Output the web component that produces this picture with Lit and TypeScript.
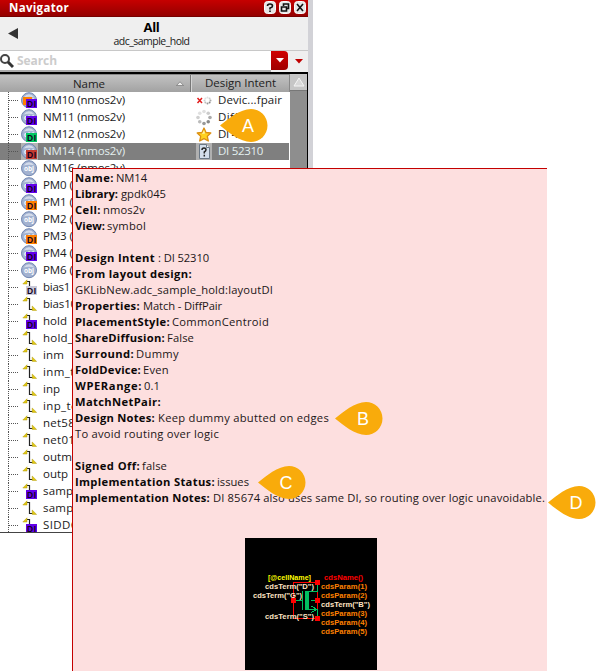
import { LitElement, html, css, svg, nothing } from "lit";
import { customElement } from "lit/decorators.js";

interface Row { name: string; w: number; kind: "obj" | "net"; di?: string; extra?: boolean; intent?: string; iw?: number; status?: string; sel?: boolean }
interface Field { label?: string; lw?: number; at?: number; value?: string; vw?: number }

const V = "#6200ea", O = "#ff7f00";
const ROWS: Row[] = [
  { name: "NM10 (nmos2v)", w: 81, kind: "obj", di: V, extra: true, intent: "Devic...fpair", iw: 63, status: "mixed" },
  { name: "NM11 (nmos2v)", w: 81, kind: "obj", di: V, intent: "DiffPair", iw: 42, status: "spin" },
  { name: "NM12 (nmos2v)", w: 81, kind: "obj", di: "#00c662", intent: "DI 42310", iw: 44, status: "star" },
  { name: "NM14 (nmos2v)", w: 81, kind: "obj", di: "#c33b30", intent: "DI 52310", iw: 44, status: "doc", sel: true },
  { name: "NM16 (nmos2v)", w: 81, kind: "obj" },
  { name: "PM0 (pmos2v)", w: 74, kind: "obj", di: V },
  { name: "PM1 (pmos2v)", w: 74, kind: "obj", di: O },
  { name: "PM2 (pmos2v)", w: 74, kind: "obj" },
  { name: "PM3 (pmos2v)", w: 74, kind: "obj", di: O },
  { name: "PM4 (pmos2v)", w: 74, kind: "obj", di: V },
  { name: "PM6 (pmos2v)", w: 74, kind: "obj" },
  { name: "bias1", w: 26, kind: "net", di: "#c9c9d8" },
  { name: "bias10", w: 33, kind: "net" },
  { name: "hold", w: 23, kind: "net", di: V },
  { name: "hold_test", w: 50, kind: "net" },
  { name: "inm", w: 20, kind: "net" },
  { name: "inm_test", w: 48, kind: "net" },
  { name: "inp", w: 16, kind: "net" },
  { name: "inp_test", w: 44, kind: "net" },
  { name: "net58", w: 31, kind: "net" },
  { name: "net017", w: 38, kind: "net" },
  { name: "outm", w: 28, kind: "net" },
  { name: "outp", w: 24, kind: "net" },
  { name: "sample", w: 39, kind: "net", di: V },
  { name: "sample_b", w: 52, kind: "net" },
  { name: "SIDDQ", w: 36, kind: "net", di: V },
];

const FIELDS: Field[] = [
  { label: "Name:", lw: 38, at: 41, value: "NM14", vw: 30 },
  { label: "Library:", lw: 42, at: 46, value: "gpdk045", vw: 44 },
  { label: "Cell:", lw: 25, at: 28, value: "nmos2v", vw: 41 },
  { label: "View:", lw: 29, at: 32, value: "symbol", vw: 38 },
  {},
  { label: "Design Intent", lw: 79, at: 83, value: ": DI 52310", vw: 50 },
  { label: "From layout design:", lw: 116 },
  { value: "GKLibNew.adc_sample_hold:layoutDI", vw: 197 },
  { label: "Properties:", lw: 64, at: 68, value: "Match - DiffPair", vw: 78 },
  { label: "PlacementStyle:", lw: 94, at: 97, value: "CommonCentroid", vw: 96 },
  { label: "ShareDiffusion:", lw: 89, at: 92, value: "False", vw: 26 },
  { label: "Surround:", lw: 58, at: 61, value: "Dummy", vw: 42 },
  { label: "FoldDevice:", lw: 65, at: 68, value: "Even", vw: 25 },
  { label: "WPERange:", lw: 66, at: 69, value: "0.1", vw: 15 },
  { label: "MatchNetPair:", lw: 85 },
  { label: "Design Notes:", lw: 79, at: 83, value: "Keep dummy abutted on edges", vw: 170 },
  { value: "To avoid routing over logic", vw: 143 },
  {},
  { label: "Signed Off:", lw: 64, at: 67, value: "false", vw: 24 },
  { label: "Implementation Status:", lw: 139, at: 142, value: "issues", vw: 31 },
  { label: "Implementation Notes:", lw: 134, at: 138, value: "DI 85674 also uses same DI, so routing over logic unavoidable.", vw: 331 },
];

const PINS = [
  { t: "A", x: 220, y: 109 }, { t: "B", x: 335, y: 402 },
  { t: "C", x: 258, y: 466 }, { t: "D", x: 548, y: 486 },
];

const rowIcon = (r: Row) => svg`<svg class="ricon" width="17" height="17" viewBox="0 0 17 17">
  ${r.sel ? svg`<rect width="17" height="17" fill="#b3b3b3"/>` : nothing}
  ${r.kind === "obj" ? svg`
    <circle cx="8" cy="8.200" r="7.500" fill="#a3b2d0" stroke="#7086b1"/>
    <path d="M2.500 5.500Q8 -1 13.500 5.500Q8 4 2.500 5.500Z" fill="#d3dbea"/>
    <text x="8" y="11" text-anchor="middle" class="obj">obj</text>` : svg`
    <path d="M5 2.500H8.500V13.500H12" fill="none" stroke="#222" stroke-width="1.200"/>
    <path d="M1.800 5L6 .8V5ZM11.200 10V14.400H15.600Z" fill="#e2c910" stroke="#b09a10" stroke-width=".5"/>`}
  ${r.extra ? svg`<rect x="2" y="5" width="9" height="8" fill="#ff7f00"/>` : nothing}
  ${r.di ? svg`<rect x="5" y="7" width="11" height="9" fill=${r.di}/>
    <text x="6" y="14.500" textLength="9" class="di">DI</text>` : nothing}
</svg>`;

const dots = (cx: number, cy: number, r: number, d: number) =>
  [..."01234567"].map((_, i) => svg`<circle cx=${cx + r * Math.sin(i * Math.PI / 4)} cy=${cy - r * Math.cos(i * Math.PI / 4)} r=${d}
    fill=${["#e0e0e0", "#ccc", "#aaa", "#888", "#999", "#bbb", "#d0d0d0", "#e0e0e0"][i]}/>`);

const statusIcon = (s?: string) => svg`<svg width="16" height="17" viewBox="0 0 16 17">
  ${s === "mixed" ? svg`<path d="M1.500 6L6 11M6 6L1.500 11" stroke="#e21b1b" stroke-width="1.500"/>${dots(11.5, 8.5, 3, 1)}` : nothing}
  ${s === "spin" ? dots(8, 8.5, 6, 1.8) : nothing}
  ${s === "star" ? svg`<path d="M8 2L10 6.500L14.800 7L11.300 10.300L12.300 15L8 12.600L3.700 15L4.700 10.300L1.200 7L6 6.500Z" fill="#ffd21f" stroke="#dc8f12" stroke-linejoin="round" stroke-width="1.300"/><path d="M8 4L9 7.500L6 8Z" fill="#fff3a3"/>` : nothing}
  ${s === "doc" ? svg`<rect width="16" height="17" fill="#b0b0b0"/><path d="M3.500 1.500H10.500L13.500 4.500V15.500H3.500Z" fill="#d3deeb" stroke="#6b7886"/><path d="M10.500 1.500V4.500H13.500" fill="#fff" stroke="#6b7886"/><path d="M6 7Q6 5 8 5T10 6.800Q10 8 8.300 9V10.500M8.300 11.700V13.500" fill="none" stroke="#222" stroke-width="1.500"/>` : nothing}
</svg>`;

@customElement("app-root")
export class AppRoot extends LitElement {
  static styles = css`
    :host { display: block; position: relative; width: 604px; height: 671px; overflow: hidden; background: #fff; font: 12px/17px "Open Sans", sans-serif; color: #1a1a1a; }
    * { box-sizing: border-box; }
    svg { display: block; flex: none; }
    .fit { white-space: pre; display: inline-block; }
    .panel { width: 313px; height: 533px; background: #efefef; border-right: 5px solid #d2d2d7; border-bottom: 1px solid #444; display: flex; flex-direction: column; }
    .title { height: 17px; flex: none; display: flex; align-items: center; justify-content: space-between; padding: 0 2px 1px 9px; background: linear-gradient(#c60000, #940000); color: #fff; font-size: 11.5px; font-weight: 700; border-bottom: 1px solid #700; }
    .btns { display: flex; gap: 3px; }
    .head { height: 34px; flex: none; display: grid; grid-template-columns: 26px 251px; align-items: center; border-bottom: 1px solid #c8c8c8; }
    .head svg { margin-left: 8px; }
    .crumb { text-align: center; line-height: 14px; font-size: 10.5px; padding-top: 1px; }
    .crumb b { display: block; font-size: 13px; color: #000; }
    .search { height: 21px; flex: none; display: flex; align-items: stretch; }
    .field { width: 271px; flex: none; background: #fff; border-bottom: 2px solid #aaa; display: flex; align-items: center; color: #ccc; font-size: 12px; font-weight: 700; gap: 3px; }
    .drop { width: 17px; height: 19px; background: linear-gradient(#d00000, #a00000); border-radius: 0 4px 4px 0; display: grid; place-items: center; }
    .more { flex: 1; padding-left: 2px; display: grid; place-items: center; }
    .table { flex: 1; min-height: 0; border-top: 2px solid #000; border-right: 1px solid #000; display: flex; background: #fff; }
    .cols { width: 290px; overflow: hidden; }
    .th { height: 18px; display: flex; background: linear-gradient(#c2c2c2, #a2a2a2); border-top: 1px solid #888; color: #222; align-items: center; font-size: 11.5px; line-height: 15px; }
    .th1 { width: 191px; display: flex; align-items: center; padding-left: 73px; justify-content: space-between; padding-right: 6px; border-right: 1px solid #777; height: 100%; }
    .th2 { flex: 1; padding-left: 13px; border-left: 1px solid #d5d5d5; border-right: 1px solid #888; height: 100%; }
    .row { height: 17px; display: flex; width: 289px; align-items: center; font-size: 11.5px; }
    .row .fit { line-height: 15px; padding-bottom: 2px; display: block; width: max-content; }
    .sel { background: #7f7f7f; color: #e4f0f0; }
    .tree { width: 12px; height: 17px; margin-left: 8px; border-left: 1px dotted #555; display: flex; align-items: center; }
    .tree i { display: block; width: 9px; border-top: 1px dotted #555; }
    .ricon { margin-left: 1px; }
    .name { width: 152px; padding-left: 5px; }
    .intent { display: flex; gap: 6px; align-items: center; padding-left: 6px; }
    .obj { font: 700 6.5px "Open Sans", sans-serif; fill: #fff; }
    .di { font: 700 8.5px "Liberation Sans", sans-serif; fill: #140020; }
    .bar { width: 17px; background: #8e8e8e; }
    .up { height: 17px; background: #c6c6c6; border-bottom: 1px solid #777; display: grid; place-items: center; }
    .tip { position: absolute; left: 72px; top: 168px; width: 475px; height: 503px; background: #fddfdf; border: 1px solid #c40000; border-right: 0; border-bottom: 0; padding: 1px 0 0 2px; font-size: 11.2px; }
    .line { height: 16px; line-height: 16px; display: flex; color: #1c1617; }
    .line b { color: #0c0808; }
    .preview { margin: 32px 0 0 170px; background: #000; shape-rendering: crispEdges; }
    .cds { font: 700 8px "Liberation Sans", sans-serif; }
    .pin { position: absolute; }
    .pin text { font: 18px "Liberation Sans", sans-serif; fill: #fff; }
  `;

  firstUpdated() {
    this.renderRoot.querySelectorAll<HTMLElement>(".fit").forEach((el) => {
      const w = Number(el.dataset.w);
      const n = el.textContent!.length;
      el.style.letterSpacing = `${(w + 1 - el.getBoundingClientRect().width) / n}px`;
    });
  }

  fit(t: string, w: number) { return html`<span class="fit" data-w=${w}>${t}</span>`; }

  button(d: string) {
    return svg`<svg width="12" height="13" viewBox="0 0 12 13"><rect x=".5" y=".5" width="11" height="12" rx="3" fill="#e6e6e6" stroke="#fafafa"/><path d=${d} fill="none" stroke="#111" stroke-width="1.600"/></svg>`;
  }

  preview() {
    const T = (x: number, y: number, w: number, c: string, t: string) =>
      svg`<text x=${x} y=${y} textLength=${w} lengthAdjust="spacingAndGlyphs" fill=${c}>${t}</text>`;
    const P = "#ffe4c4", R = "#f00", A = "#ff8000";
    return svg`<svg class="preview cds" width="132" height="132" viewBox="0 0 132 132">
      <rect x="48.500" y="44.500" width="24" height="36" fill="none" stroke="#f00"/>
      <path d="M49 62.500H57M72.500 45V53.500H61M66 62.500H72M72.500 79V71.500H61M66 68L72 71.500L66 74.500" fill="none" stroke="#00c060"/>
      <path d="M57.500 53V72" stroke="#00c060"/><path d="M62 53V72" stroke="#00c060" stroke-width="4"/>
      <path d="M70 42h5v5h-5zM46 60h5v5h-5zM70 60h5v5h-5zM70 78h5v5h-5z" fill="#f00"/>
      ${T(23, 42, 43, "#ff0", "[@cellName]")}${T(79, 42, 39, R, "cdsName()")}
      ${T(20, 51, 49, P, 'cdsTerm("D")')}${T(8, 59.5, 49, P, 'cdsTerm("G")')}${T(20, 80.5, 49, P, 'cdsTerm("S")')}
      ${T(76, 51, 46, A, "cdsParam(1)")}${T(76, 60, 46, A, "cdsParam(2)")}${T(76, 68.5, 49, P, 'cdsTerm("B")')}
      ${T(76, 78, 46, A, "cdsParam(3)")}${T(76, 87, 46, A, "cdsParam(4)")}${T(76, 96, 46, A, "cdsParam(5)")}
    </svg>`;
  }

  render() {
    return html`
      <div class="panel">
        <div class="title">${this.fit("Navigator", 59)}
          <div class="btns">
            ${this.button("M3.500 5Q3.500 3 6 3T8.500 5Q8.500 6.300 6 7V8.500M6 9.500V11")}
            ${this.button("M4.500 5V3H9.500V7.500H7.500M2.500 6H7.500V10H2.500Z")}
            ${this.button("M3 3L9 10M9 3L3 10")}
          </div>
        </div>
        <div class="head">
          <svg width="10" height="11"><path d="M10 0V11L0 5.500Z" fill="#333"/></svg>
          <div class="crumb"><b>${this.fit("All", 15)}</b>${this.fit("adc_sample_hold", 75)}</div>
        </div>
        <div class="search">
          <div class="field">
            <svg width="14" height="17"><circle cx="5" cy="7" r="4" fill="none" stroke="#444" stroke-width="2"/><path d="M8 10L13 15" stroke="#333" stroke-width="3"/></svg>
            ${this.fit("Search", 39)}
          </div>
          <div class="drop"><svg width="8" height="5"><path d="M0 0H8L4 4.500Z" fill="#fff"/></svg></div>
          <div class="more"><svg width="8" height="5"><path d="M0 0H8L4 4.500Z" fill="#c00000"/></svg></div>
        </div>
        <div class="table">
          <div class="cols">
            <div class="th">
              <div class="th1">${this.fit("Name", 31)}<svg width="8" height="5"><path d="M.5 4.500L4 .8L7.500 4.500Z" fill="#eee" stroke="#666" stroke-width=".6"/></svg></div>
              <div class="th2">${this.fit("Design Intent", 70)}</div>
            </div>
            ${ROWS.map((r) => html`<div class="row ${r.sel ? "sel" : ""}">
              <div class="tree"><i></i></div>${rowIcon(r)}
              <div class="name">${this.fit(r.name, r.w)}</div>
              ${r.intent ? html`<div class="intent">${statusIcon(r.status)}${this.fit(r.intent, r.iw!)}</div>` : nothing}
            </div>`)}
          </div>
          <div class="bar"><div class="up"><svg width="12" height="10"><path d="M1 9L6 1L11 9Z" fill="#d8d8d8" stroke="#f5f5f5"/></svg></div></div>
        </div>
      </div>
      <div class="tip">
        ${FIELDS.map((f) => html`<div class="line">
          ${f.label ? html`<b style="width:${f.at ?? f.lw}px">${this.fit(f.label, f.lw!)}</b>` : nothing}
          ${f.value ? this.fit(f.value, f.vw!) : nothing}</div>`)}
        ${this.preview()}
      </div>
      ${PINS.map((p) => html`<svg class="pin" style="left:${p.x}px;top:${p.y}px" width="48" height="34" viewBox="0 0 48 34">
        <path d="M0 16.500C8 10 20 0 31 0A16.500 16.500 0 0 1 31 33C20 33 8 23 0 16.500Z" fill="#f9ab0b"/>
        <text x="28" y="23" text-anchor="middle">${p.t}</text></svg>`)}
    `;
  }
}
